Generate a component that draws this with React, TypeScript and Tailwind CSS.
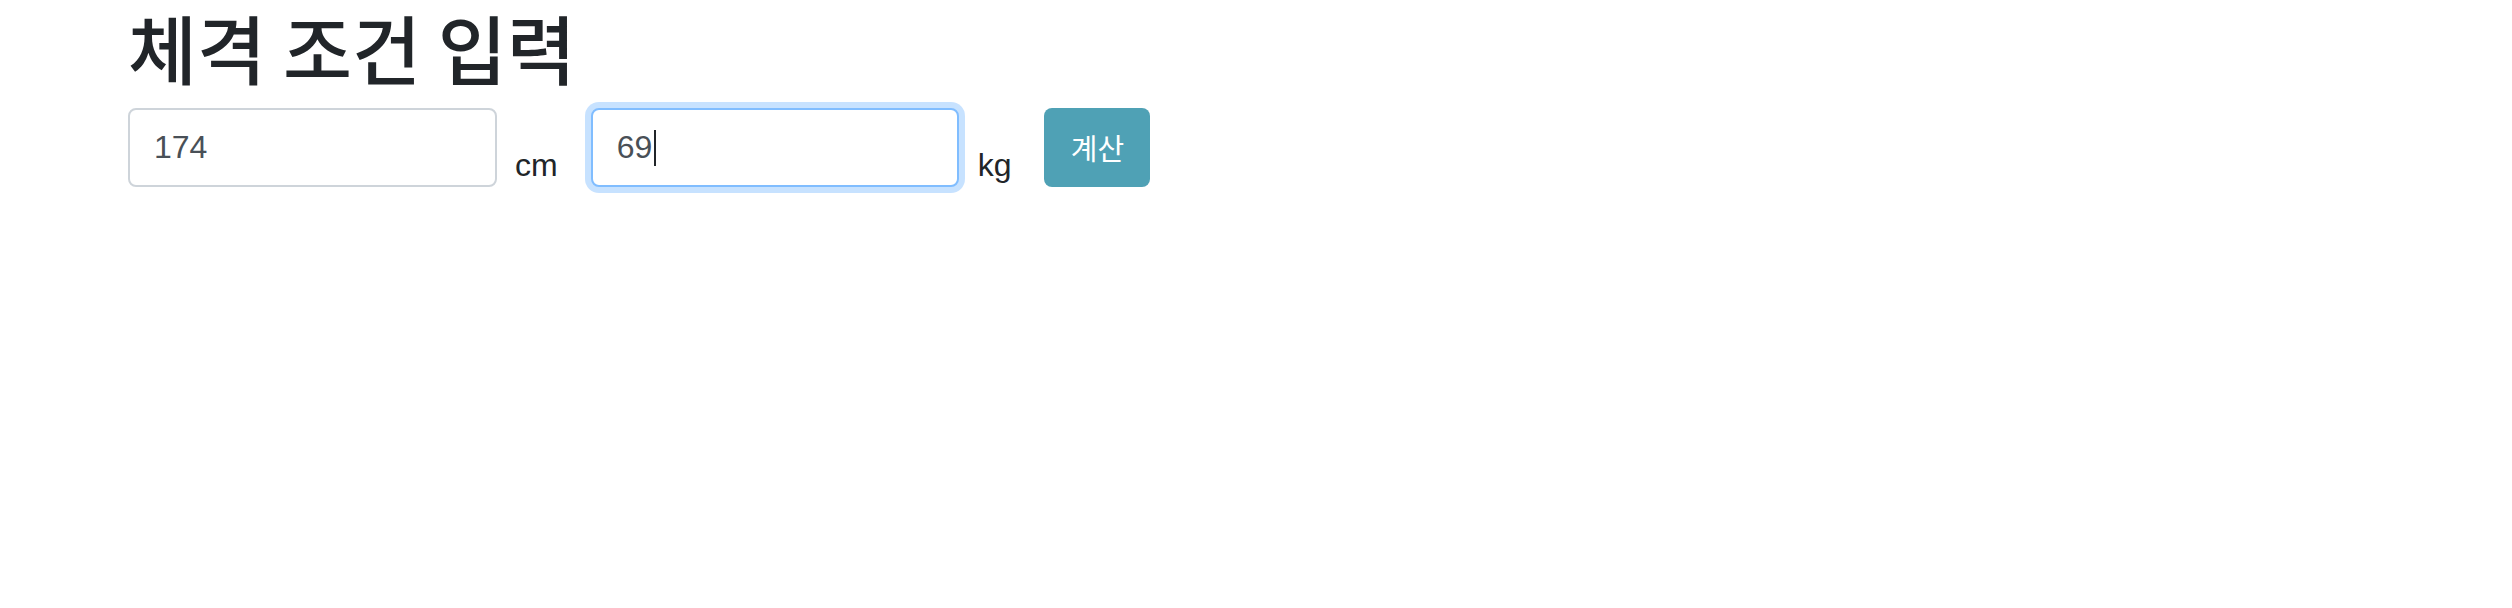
import React from 'react';

const sans = '"Liberation Sans", "Noto Sans CJK KR", Arial, sans-serif';

export default function App() {
  return (
    <div className="min-h-[608px] bg-white pl-[128px]" style={{ fontFamily: sans }}>
      {/* Title */}
      <h1
        className="h-[108px] pt-[2px] text-[75px] font-medium leading-[90px] text-[#212529]"
        style={{ fontFamily: '"Noto Sans CJK KR", sans-serif' }}
      >
        체격 조건 입력
      </h1>

      {/* Height / weight form */}
      <form className="flex items-end" onSubmit={(e) => e.preventDefault()}>
        <input
          type="text"
          defaultValue="174"
          className="h-[79px] w-[369px] rounded-[8px] border-2 border-[#ced4da] bg-white px-[24px] text-[32px] text-[#495057] outline-none"
        />
        <span className="ml-[18px] mr-[33px] text-[32px] leading-[44px] text-[#212529]">cm</span>

        <div className="relative">
          <input
            type="text"
            defaultValue="69"
            className="h-[79px] w-[368px] rounded-[8px] border-2 border-[#80bdff] bg-white px-[24px] text-[32px] text-[#495057] shadow-[0_0_0_6px_rgba(0,123,255,0.22)] outline-none"
          />
          {/* caret */}
          <span className="absolute left-[63px] top-[22px] h-[36px] w-[2px] bg-[#212529]" />
        </div>
        <span className="ml-[19px] mr-[33px] text-[32px] leading-[44px] text-[#212529]">kg</span>

        <button
          type="submit"
          className="flex h-[79px] w-[106px] items-center justify-center rounded-[8px] bg-[#4fa1b5] text-[29px] text-white"
          style={{ fontFamily: '"Noto Sans CJK KR", sans-serif' }}
        >
          계산
        </button>
      </form>
    </div>
  );
}
